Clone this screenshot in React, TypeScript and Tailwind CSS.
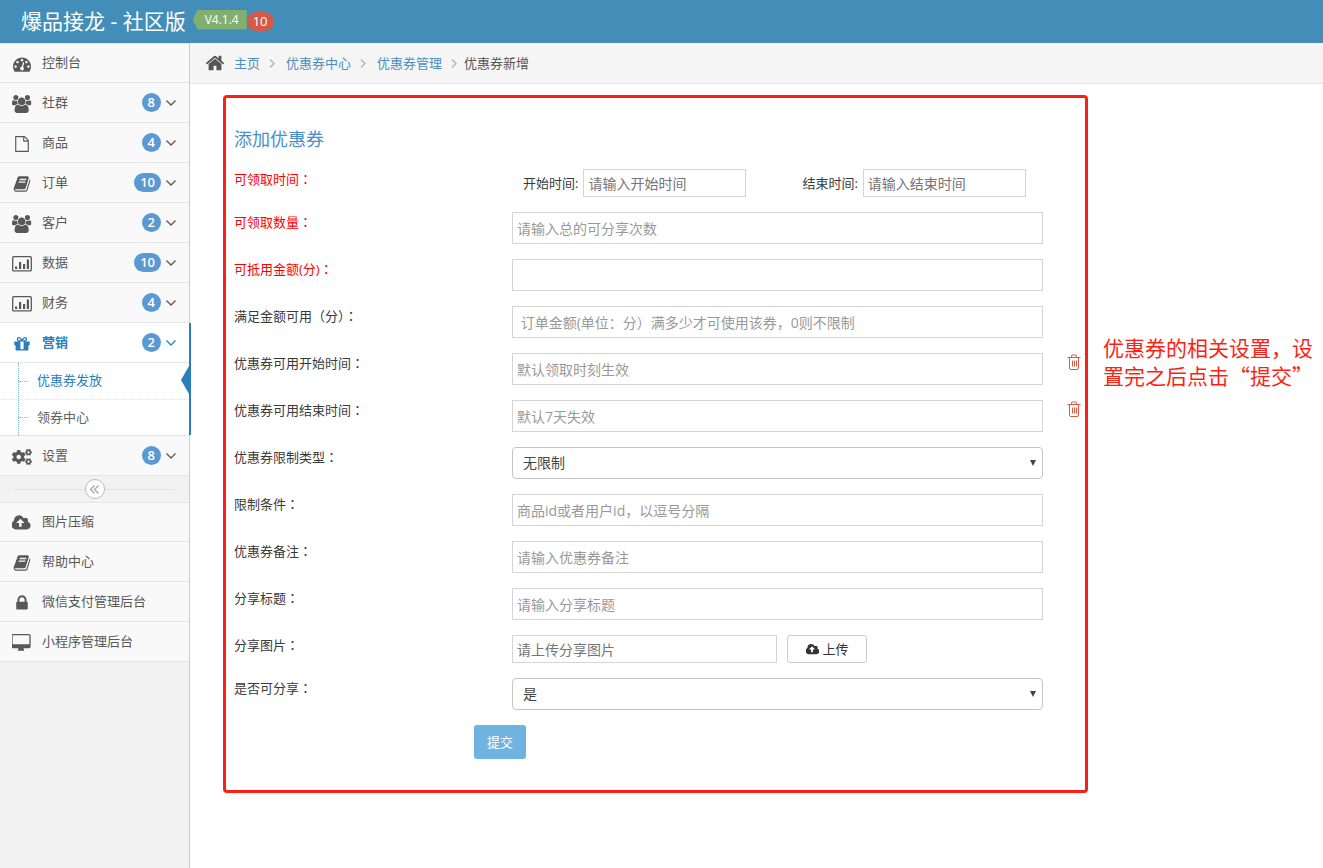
import type { ReactNode } from 'react'
import { FaCogs } from 'react-icons/fa'

// viewBox width and path of each solid glyph, all 1792 high
const GLYPHS = {
  dashboard: [1792, 'M384 1152q0-53-37.5-90.5t-90.5-37.5-90.5 37.5-37.5 90.5 37.5 90.5 90.5 37.5 90.5-37.5 37.5-90.5zm192-448q0-53-37.5-90.5t-90.5-37.5-90.5 37.5-37.5 90.5 37.5 90.5 90.5 37.5 90.5-37.5 37.5-90.5zm428 481l101-382q6-26-7.5-48.5t-38.5-29.5-48 6.5-30 39.5l-101 382q-60 5-107 43.5t-63 98.5q-20 77 20 146t117 89 146-20 89-117q16-60-6-117t-72-91zm660-33q0-53-37.5-90.5t-90.5-37.5-90.5 37.5-37.5 90.5 37.5 90.5 90.5 37.5 90.5-37.5 37.5-90.5zm-640-640q0-53-37.5-90.5t-90.5-37.5-90.5 37.5-37.5 90.5 37.5 90.5 90.5 37.5 90.5-37.5 37.5-90.5zm448 192q0-53-37.5-90.5t-90.5-37.5-90.5 37.5-37.5 90.5 37.5 90.5 90.5 37.5 90.5-37.5 37.5-90.5zm320 448q0 261-141 483-19 29-54 29h-1402q-35 0-54-29-141-221-141-483 0-182 71-348t191-286 286-191 348-71 348 71 286 191 191 286 71 348z'],
  users: [1920, 'M593 896q-162 5-265 128h-134q-82 0-138-40.5t-56-118.5q0-353 124-353 6 0 43.5 21t97.5 42.5 119 21.5q67 0 133-23-5 37-5 66 0 139 81 256zm1071 637q0 120-73 189.5t-194 69.5h-874q-121 0-194-69.5t-73-189.5q0-53 3.5-103.5t14-109 26.5-108.5 43-97.5 62-81 85.5-53.5 111.5-20q10 0 43 21.5t73 48 107 48 135 21.5 135-21.5 107-48 73-48 43-21.5q61 0 111.5 20t85.5 53.5 62 81 43 97.5 26.5 108.5 14 109 3.5 103.5zm-1024-1277q0 106-75 181t-181 75-181-75-75-181 75-181 181-75 181 75 75 181zm704 384q0 159-112.5 271.5t-271.5 112.5-271.5-112.5-112.5-271.5 112.5-271.5 271.5-112.5 271.5 112.5 112.5 271.5zm576 225q0 78-56 118.5t-138 40.5h-134q-103-123-265-128 81-117 81-256 0-29-5-66 66 23 133 23 59 0 119-21.5t97.5-42.5 43.5-21q124 0 124 353zm-128-609q0 106-75 181t-181 75-181-75-75-181 75-181 181-75 181 75 75 181z'],
  file: [1792, 'M1596 380q28 28 48 76t20 88v1152q0 40-28 68t-68 28h-1344q-40 0-68-28t-28-68v-1600q0-40 28-68t68-28h896q40 0 88 20t76 48zm-444-244v376h376q-10-29-22-41l-313-313q-12-12-41-22zm384 1528v-1024h-416q-40 0-68-28t-28-68v-416h-768v1536h1280z'],
  book: [1792, 'M1703 478q40 57 18 129l-275 906q-19 64-76.5 107.5t-122.5 43.5h-923q-77 0-148.5-53.5t-99.5-131.5q-24-67-2-127 0-4 3-27t4-37q1-8-3-21.5t-3-19.5q2-11 8-21t16.5-23.5 16.5-23.5q23-38 45-91.5t30-91.5q3-10 .5-30t-.5-28q3-11 17-28t17-23q21-36 42-92t25-90q1-9-2.5-32t.5-28q4-13 22-30.5t22-22.5q19-26 42.5-84.5t27.5-96.5q1-8-3-25.5t-2-26.5q2-8 9-18t18-23 17-21q8-12 16.5-30.5t15-35 16-36 19.5-32 26.5-23.5 36-11.5 47.5 5.5l-1 3q38-9 51-9h761q74 0 114 56t18 130l-274 906q-36 119-71.5 153.5t-128.5 34.5h-869q-27 0-38 15-11 16-1 43 24 70 144 70h923q29 0 56-15.5t35-41.5l300-987q7-22 5-57 38 15 59 43zm-1064 2q-4 13 2 22.5t20 9.5h608q13 0 25.5-9.5t16.5-22.5l21-64q4-13-2-22.5t-20-9.5h-608q-13 0-25.5 9.5t-16.5 22.5zm-83 256q-4 13 2 22.5t20 9.5h608q13 0 25.5-9.5t16.5-22.5l21-64q4-13-2-22.5t-20-9.5h-608q-13 0-25.5 9.5t-16.5 22.5z'],
  gift: [1792, 'M1056 1356v-716h-320v716q0 25 18 38.5t46 13.5h192q28 0 46-13.5t18-38.5zm-456-844h195l-126-161q-26-31-69-31-40 0-68 28t-28 68 28 68 68 28zm688-96q0-40-28-68t-68-28q-43 0-69 31l-125 161h194q40 0 68-28t28-68zm376 256v320q0 14-9 23t-23 9h-96v416q0 40-28 68t-68 28h-1088q-40 0-68-28t-28-68v-416h-96q-14 0-23-9t-9-23v-320q0-14 9-23t23-9h440q-93 0-158.5-65.5t-65.5-158.5 65.5-158.5 158.5-65.5q107 0 168 77l128 165 128-165q61-77 168-77 93 0 158.5 65.5t65.5 158.5-65.5 158.5-158.5 65.5h440q14 0 23 9t9 23z'],
  cloud: [1920, 'M1216 864q0-14-9-23l-352-352q-9-9-23-9t-23 9l-351 351q-10 12-10 24 0 14 9 23t23 9h224v352q0 13 9.5 22.5t22.5 9.5h192q13 0 22.5-9.5t9.5-22.5v-352h224q13 0 22.5-9.5t9.5-22.5zm640 288q0 159-112.5 271.5t-271.5 112.5h-1088q-185 0-316.5-131.5t-131.5-316.5q0-130 70-240t188-165q-2-30-2-43 0-212 150-362t362-150q156 0 285.5 87t188.5 231q71-62 166-62 106 0 181 75t75 181q0 76-41 138 130 31 213.5 135.5t83.5 238.5z'],
  home: [1792, 'M1472 992v480q0 26-19 45t-45 19h-384v-384h-256v384h-384q-26 0-45-19t-19-45v-480q0-1 .5-3t.5-3l575-474 575 474q1 2 1 6zm223-69l-62 74q-8 9-21 11h-3q-13 0-21-7l-692-577-692 577q-12 8-24 7-13-2-21-11l-62-74q-8-10-7-23.5t11-21.5l719-599q32-26 76-26t76 26l244 204v-195q0-14 9-23t23-9h192q14 0 23 9t9 23v408l219 182q10 8 11 21.5t-7 23.5z'],
  lock: [1792, 'M640 768h512v-192q0-106-75-181t-181-75-181 75-75 181v192zm832 96v576q0 40-28 68t-68 28h-960q-40 0-68-28t-28-68v-576q0-40 28-68t68-28h32v-192q0-184 132-316t316-132 316 132 132 316v192h32q40 0 68 28t28 68z'],
  desktop: [1920, 'M1728 992v-832q0-13-9.5-22.5t-22.5-9.5h-1600q-13 0-22.5 9.5t-9.5 22.5v832q0 13 9.5 22.5t22.5 9.5h1600q13 0 22.5-9.5t9.5-22.5zm128-832v1088q0 66-47 113t-113 47h-544q0 37 16 77.5t32 71 16 43.5q0 26-19 45t-45 19h-512q-26 0-45-19t-19-45q0-14 16-44t32-70 16-78h-544q-66 0-113-47t-47-113v-1088q0-66 47-113t113-47h1600q66 0 113 47t47 113z'],
} as const

function Glyph({ name, className }: { name: keyof typeof GLYPHS; className: string }) {
  const [width, d] = GLYPHS[name]
  return (
    <svg viewBox={`0 0 ${width} 1792`} fill="currentColor" className={className} aria-hidden="true">
      <path d={d} />
    </svg>
  )
}

function BarChart() {
  return (
    <svg viewBox="0 0 20 16" className="w-5 h-4" fill="currentColor" aria-hidden="true">
      <rect x="0.7" y="0.7" width="18.6" height="14.2" rx="1" fill="none" stroke="currentColor" strokeWidth="1.3" />
      <path d="M3 10.5h2.2V13H3zM7 6h2.2v7H7zM11 8h2.2v5H11zM14.8 3.5H17V13h-2.2z" />
    </svg>
  )
}

function Trash() {
  return (
    <svg viewBox="0 0 14 16" className="w-3.5 h-4" fill="none" stroke="currentColor" aria-hidden="true">
      <path d="M0.5 3.5h13M4.5 3V2q0-1 1-1h3q1 0 1 1v1M2.5 4v10q0 1.5 1.5 1.5h6q1.5 0 1.5-1.5V4M5.5 6.5v6M7.5 6.5v6M9.5 6.5v6" />
    </svg>
  )
}

function Chevron() {
  return (
    <svg viewBox="0 0 10 6" className="w-2.5 h-1.5" fill="none" stroke="currentColor" strokeWidth="1.3" aria-hidden="true">
      <path d="M0.5 0.5L5 5l4.5-4.5" />
    </svg>
  )
}

type Item = { label: string; icon: ReactNode; count?: number; children?: string[] }

const MENU: Item[] = [
  { label: '控制台', icon: <Glyph name="dashboard" className="h-[18px]" /> },
  { label: '社群', icon: <Glyph name="users" className="h-[18px]" />, count: 8 },
  { label: '商品', icon: <Glyph name="file" className="h-4" />, count: 4 },
  { label: '订单', icon: <Glyph name="book" className="h-[18px]" />, count: 10 },
  { label: '客户', icon: <Glyph name="users" className="h-[18px]" />, count: 2 },
  { label: '数据', icon: <BarChart />, count: 10 },
  { label: '财务', icon: <BarChart />, count: 4 },
  { label: '营销', icon: <Glyph name="gift" className="h-[18px]" />, count: 2, children: ['优惠券发放', '领券中心'] },
  { label: '设置', icon: <FaCogs className="size-5" />, count: 8 },
]

const SHORTCUTS: Item[] = [
  { label: '图片压缩', icon: <Glyph name="cloud" className="h-[18px]" /> },
  { label: '帮助中心', icon: <Glyph name="book" className="h-[18px]" /> },
  { label: '微信支付管理后台', icon: <Glyph name="lock" className="h-[18px]" /> },
  { label: '小程序管理后台', icon: <Glyph name="desktop" className="h-[18px]" /> },
]

function NavItem({ item }: { item: Item }) {
  const open = !!item.children
  return (
    <li className="group relative">
      <a
        href="#"
        className={`flex h-10 items-center border-b border-[#e5e5e5] pl-2 pr-[13px] group-first:border-t ${open ? 'bg-white font-bold text-[#2b7dbc]' : 'bg-[#f9f9f9] text-[#585858]'}`}
      >
        <span className="mr-1.5 flex w-7 justify-center pt-0.5">{item.icon}</span>
        <span className="flex-1 pb-0.5">{item.label}</span>
        {item.count && (
          <>
            <span className="mr-[5px] h-[19px] rounded-full bg-[#5a99d1] px-1.5 text-[13px] font-semibold leading-[19px] text-white">
              {item.count}
            </span>
            <Chevron />
          </>
        )}
      </a>
      {item.children && (
        <>
          <ul className="relative border-b border-[#e5e5e5] bg-white">
            {item.children.map((name, i) => (
              <li key={name} className={i ? 'border-t border-dotted border-[#e4e4e4]' : ''}>
                <a href="#" className={`flex items-center pl-[18px] ${i ? 'h-[35px] text-[#616161]' : 'h-9 text-[#2b7dbc]'}`}>
                  <span className="h-full border-l border-dotted border-[#7fb0d6]" />
                  <span className="mr-2.5 w-2 border-t border-dotted border-[#7fb0d6]" />
                  <span className="pb-0.5">{name}</span>
                </a>
              </li>
            ))}
          </ul>
          <span className="absolute -right-0.5 bottom-px top-0 w-0.5 bg-[#2b7dbc]" />
          <svg viewBox="0 0 8 28" className="absolute right-0 top-[43px] h-7 w-2" aria-hidden="true">
            <path d="M8 0L0 14l8 14z" fill="#2b7dbc" />
          </svg>
        </>
      )}
    </li>
  )
}

function Sidebar() {
  return (
    <nav className="w-[190px] shrink-0 border-r border-[#ccc] bg-[#f2f2f2]">
      <ul>
        {MENU.map((item) => <NavItem key={item.label} item={item} />)}
      </ul>
      <div className="flex h-[26px] items-center px-[15px] text-[#aaa]">
        <span className="h-px flex-1 bg-[#e0e0e0]" />
        <button aria-label="收起菜单" className="flex size-5 items-center justify-center rounded-full border border-[#bbb] bg-white">
          <svg viewBox="0 0 9 9" className="size-[9px]" fill="none" stroke="currentColor" strokeWidth="1.4" aria-hidden="true">
            <path d="M4.5 0.5l-4 4 4 4M8.5 0.5l-4 4 4 4" />
          </svg>
        </button>
        <span className="h-px flex-1 bg-[#e0e0e0]" />
      </div>
      <ul>
        {SHORTCUTS.map((item) => <NavItem key={item.label} item={item} />)}
      </ul>
    </nav>
  )
}

function Breadcrumb() {
  return (
    <div className="flex h-[41px] items-center border-b border-[#e5e5e5] bg-[#f5f5f5] pl-[15px]">
      <Glyph name="home" className="mr-[9px] h-5 text-[#555]" />
      {['主页', '优惠券中心', '优惠券管理'].map((name, i) => (
        <span key={name} className="flex items-center">
          <a href="#" className="text-[#4c8fbd]">{name}</a>
          <svg viewBox="0 0 6 9" className={`ml-[9px] h-[9px] w-1.5 ${i === 2 ? 'mr-[7px]' : 'mr-[11px]'}`} fill="none" stroke="#b2b6bf" strokeWidth="1.5" aria-hidden="true">
            <path d="M1 0.5l4 4-4 4" />
          </svg>
        </span>
      ))}
      <span className="text-[#555]">优惠券新增</span>
    </div>
  )
}

const INPUT = 'border border-[#d5d5d5] bg-white px-1 text-sm text-[#555]'

type RowProps = { id: string; label: string; required?: boolean; removable?: boolean; children: ReactNode }

function Row({ id, label, required, removable, children }: RowProps) {
  return (
    <div className="grid grid-cols-[278px_1fr_42px]">
      <label htmlFor={id} className={`h-5 leading-5 ${required ? 'text-[#f00]' : ''}`}>
        {label}
        {/* the TC face centres the full-width colon */}
        <span className="font-['Noto_Sans_CJK_TC',sans-serif] leading-none">：</span>
      </label>
      {children}
      {removable && (
        <button type="button" aria-label="删除" className="flex items-start justify-end pr-1 pt-px text-[#dd5a43]">
          <Trash />
        </button>
      )}
    </div>
  )
}

function TextRow({ placeholder, ...row }: Omit<RowProps, 'children'> & { placeholder?: string }) {
  return (
    <Row {...row}>
      <input id={row.id} placeholder={placeholder} className={`h-8 w-full placeholder:text-[#999] ${INPUT}`} />
    </Row>
  )
}

function SelectRow({ options, ...row }: Omit<RowProps, 'children'> & { options: string[] }) {
  return (
    <Row {...row}>
      <div className="relative">
        <select id={row.id} className="block h-8 w-full appearance-none rounded border border-[#c4c4c4] bg-white px-2.5 text-sm text-[#444]">
          {options.map((o) => <option key={o}>{o}</option>)}
        </select>
        <svg viewBox="0 0 6 6" className="pointer-events-none absolute right-[7px] top-[13px] size-1.5" aria-hidden="true">
          <path d="M0 0h6L3 6z" fill="#444" />
        </svg>
      </div>
    </Row>
  )
}

function CouponForm() {
  return (
    <form className="flex min-w-0 flex-1 flex-col gap-[15px] rounded border-[3px] border-[#ff1e14] pb-[31px] pl-2 pt-[27px]">
      <h1 className="mb-px text-lg leading-7 text-[#478fca]">添加优惠券</h1>
      <Row id="start" label="可领取时间" required>
        <div className="flex items-center pl-[11px]">
          <label htmlFor="start">开始时间:</label>
          <input id="start" placeholder="请输入开始时间" className={`ml-[5px] h-7 w-[163px] placeholder:text-[#757575] ${INPUT}`} />
          <label htmlFor="end" className="ml-14">结束时间:</label>
          <input id="end" placeholder="请输入结束时间" className={`ml-[5px] h-7 w-[163px] placeholder:text-[#757575] ${INPUT}`} />
        </div>
      </Row>
      <TextRow id="total" label="可领取数量" required placeholder="请输入总的可分享次数" />
      <TextRow id="amount" label="可抵用金额(分)" required />
      <TextRow id="threshold" label="满足金额可用（分）" placeholder=" 订单金额(单位：分）满多少才可使用该券，0则不限制" />
      <TextRow id="valid-from" label="优惠券可用开始时间" placeholder="默认领取时刻生效" removable />
      <TextRow id="valid-to" label="优惠券可用结束时间" placeholder="默认7天失效" removable />
      <SelectRow id="limit-type" label="优惠券限制类型" options={['无限制']} />
      <TextRow id="limit" label="限制条件" placeholder="商品id或者用户id，以逗号分隔" />
      <TextRow id="remark" label="优惠券备注" placeholder="请输入优惠券备注" />
      <TextRow id="share-title" label="分享标题" placeholder="请输入分享标题" />
      <Row id="share-image" label="分享图片">
        <div className="flex gap-2.5">
          <input id="share-image" placeholder="请上传分享图片" className={`h-7 w-[265px] placeholder:text-[#757575] ${INPUT}`} />
          <button type="button" className="flex h-7 w-20 items-center justify-center gap-[3px] rounded-[3px] border border-[#ccc] text-[#333]">
            <Glyph name="cloud" className="h-[13px]" />
            上传
          </button>
        </div>
      </Row>
      <SelectRow id="shareable" label="是否可分享" options={['是', '否']} />
      <button type="submit" className="ml-60 h-[34px] w-[52px] rounded-[3px] bg-[#6fb3e0] text-white">提交</button>
    </form>
  )
}

export default function App() {
  return (
    <div className="flex min-h-screen flex-col bg-white font-['Open_Sans','Noto_Sans_CJK_SC',sans-serif] text-[13px] leading-5 text-[#393939]">
      <header className="flex h-[43px] items-center bg-[#438eb9] pl-[21px] text-white">
        <span className="mr-[7px] pb-0.5 text-[21px]">爆品接龙 - 社区版</span>
        <span className="mb-1 h-5 w-[54px] bg-[#82af6f] pl-3 text-xs leading-5 [clip-path:polygon(0_50%,5px_0,100%_0,100%_100%,5px_100%)]">
          V4.1.4
        </span>
        <span className="h-[19px] rounded-full bg-[#d15b47] px-1.5 text-[13px] leading-[19px]">10</span>
      </header>
      <div className="flex flex-1">
        <Sidebar />
        <main className="min-w-0 flex-1">
          <Breadcrumb />
          <div className="flex pl-[33px] pt-[11px]">
            <CouponForm />
            <p className="w-[235px] pl-[15px] pr-2.5 pt-[238px] font-['Noto_Sans_CJK_SC',sans-serif] text-[21px] leading-7 text-[#ff1e14]">
              优惠券的相关设置，设置完之后点击“提交”
            </p>
          </div>
        </main>
      </div>
    </div>
  )
}
